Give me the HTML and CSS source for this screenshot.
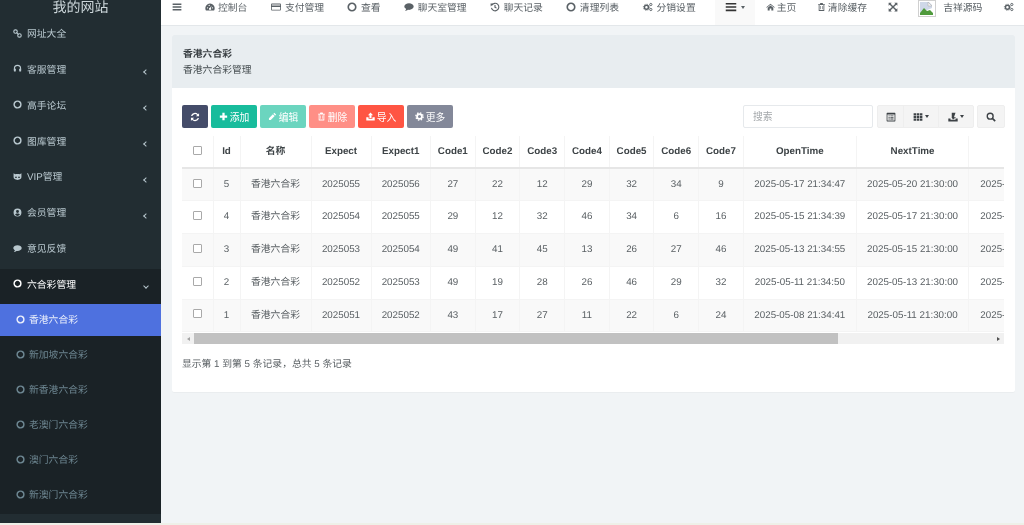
FILE: index.html
```html
<!DOCTYPE html>
<html lang="zh">
<head>
<meta charset="utf-8">
<title>香港六合彩</title>
<link rel="stylesheet" href="styles.css">
</head>
<body>
<svg class="defs" width="0" height="0" aria-hidden="true">
  <symbol id="i-circle" viewBox="0 0 16 16"><circle cx="8" cy="8" r="6" fill="none" stroke="currentColor" stroke-width="2.6"/></symbol>
  <symbol id="i-link" viewBox="0 0 16 16"><g fill="none" stroke="currentColor" stroke-width="2"><rect x="1.5" y="1.5" width="6" height="6" rx="2.6"/><rect x="8.5" y="8.5" width="6" height="6" rx="2.6"/><path d="M6 6l4 4"/></g></symbol>
  <symbol id="i-head" viewBox="0 0 16 16"><path d="M2.5 9V8a5.500 5.500 0 0 1 11 0v1" fill="none" stroke="currentColor" stroke-width="2"/><rect x="1.500" y="8" width="3.500" height="5.500" rx="1.200" fill="currentColor"/><rect x="11" y="8" width="3.500" height="5.500" rx="1.200" fill="currentColor"/></symbol>
  <symbol id="i-cat" viewBox="0 0 16 16"><path fill="currentColor" d="M1 2l3 2C5.500 3.600 10.500 3.600 12 4l3-2v7c0 3-2.500 5-7 5s-7-2-7-5z"/><circle cx="5.300" cy="9.300" r="1.500" fill="#222d32"/><circle cx="10.700" cy="9.300" r="1.500" fill="#222d32"/></symbol>
  <symbol id="i-user" viewBox="0 0 16 16"><path fill="currentColor" fill-rule="evenodd" d="M8 1a7 7 0 1 1 0 14A7 7 0 0 1 8 1zm0 2.500a2.600 2.600 0 1 0 0 5.200 2.600 2.600 0 0 0 0-5.200zM3.800 12.200c1 1.200 2.500 1.800 4.200 1.800s3.200-.6 4.200-1.800C11.800 10.500 10 9.700 8 9.700s-3.800.8-4.200 2.500z"/></symbol>
  <symbol id="i-chat" viewBox="0 0 16 16"><path fill="currentColor" d="M8 2c4 0 7.500 2.300 7.500 5.300S12 12.600 8 12.600c-.6 0-1.200 0-1.800-.1C5 13.600 3.300 14 1.500 14c1-1 1.700-1.900 1.900-3C1.500 10 .5 8.700.5 7.300.5 4.300 4 2 8 2z"/></symbol>
  <symbol id="i-bars" viewBox="0 0 16 16"><path fill="currentColor" d="M1 2.500h14v2.200H1zM1 6.900h14v2.200H1zM1 11.300h14v2.200H1z"/></symbol>
  <symbol id="i-dash" viewBox="0 0 16 16"><path fill="currentColor" fill-rule="evenodd" d="M8 2.500a7.500 7.500 0 0 1 6.500 11.200H1.500A7.500 7.500 0 0 1 8 2.500zM4 8.300a1 1 0 1 0 0 2 1 1 0 0 0 0-2zm8 0a1 1 0 1 0 0 2 1 1 0 0 0 0-2zM6.700 4.500a1 1 0 1 0 0 2 1 1 0 0 0 0-2zm3.800 1L8.200 9.200a1.700 1.700 0 1 0 1.200.6z"/></symbol>
  <symbol id="i-card" viewBox="0 0 16 16"><path fill="currentColor" fill-rule="evenodd" d="M1.500 2.500h13A1.500 1.500 0 0 1 16 4v8a1.500 1.500 0 0 1-1.500 1.500h-13A1.500 1.500 0 0 1 0 12V4a1.500 1.500 0 0 1 1.500-1.500zm-.2 1.300v1.700h13.400V3.800zm0 4v4.400h13.400V7.800z"/></symbol>
  <symbol id="i-hist" viewBox="0 0 16 16"><path fill="none" stroke="currentColor" stroke-width="1.800" d="M3 5a6 6 0 1 1-.7 4.500M8 4.800V8.500l2.500 1.300"/><path fill="currentColor" d="M.8 2.300l5 .2-4.600 4.500z"/></symbol>
  <symbol id="i-cogs" viewBox="0 0 16 16"><circle cx="5.500" cy="8.500" r="3.200" fill="none" stroke="currentColor" stroke-width="2.400"/><circle cx="5.500" cy="8.500" r="5" fill="none" stroke="currentColor" stroke-width="1.200" stroke-dasharray="1.800 2.100"/><circle cx="12.500" cy="4" r="1.800" fill="none" stroke="currentColor" stroke-width="1.500"/><circle cx="12.500" cy="12" r="1.800" fill="none" stroke="currentColor" stroke-width="1.500"/></symbol>
  <symbol id="i-home" viewBox="0 0 16 16"><path fill="currentColor" d="M8 2l7.500 6.300-.9 1L8 3.800 1.400 9.300l-.9-1zM3 9.500l5-4.200 5 4.200V14H9.500v-3.300h-3V14H3z"/></symbol>
  <symbol id="i-trash" viewBox="0 0 16 16"><path fill="currentColor" fill-rule="evenodd" d="M6 1h4l1 2h3v1.500h-1V14a1 1 0 0 1-1 1H4a1 1 0 0 1-1-1V4.500H2V3h3zM4.500 4.500v9h7v-9zM6 6h1v6H6zm3 0h1v6H9z"/></symbol>
  <symbol id="i-exp" viewBox="0 0 16 16"><path fill="currentColor" d="M1 1h5L4.300 2.700l3.700 3.700 3.700-3.700L10 1h5v5l-1.700-1.700L9.600 8l3.700 3.700L15 10v5h-5l1.700-1.700L8 9.600l-3.700 3.700L6 15H1v-5l1.700 1.700L6.400 8 2.700 4.300 1 6z"/></symbol>
  <symbol id="i-sync" viewBox="0 0 16 16"><path fill="currentColor" d="M14.500 1.800v5h-5l1.900-1.900A4.500 4.500 0 0 0 3.700 6.500H1.600a6.500 6.500 0 0 1 11.200-3zM1.500 14.200v-5h5l-1.900 1.900a4.500 4.500 0 0 0 7.700-1.600h2.100a6.500 6.500 0 0 1-11.200 3z"/></symbol>
  <symbol id="i-plus" viewBox="0 0 16 16"><path fill="currentColor" d="M6 1.500h4V6h4.500v4H10v4.500H6V10H1.500V6H6z"/></symbol>
  <symbol id="i-pen" viewBox="0 0 16 16"><path fill="currentColor" d="M11.300 1.500l3.200 3.200-1.700 1.700-3.200-3.200zM8.700 4.100l3.200 3.200-7 7H1.700v-3.200z"/></symbol>
  <symbol id="i-up" viewBox="0 0 16 16"><path fill="currentColor" d="M8 1l4.500 4.800H9.800v5H6.200v-5H3.500zM.5 9.500h4v2.500h7V9.500h4V15H.5z"/></symbol>
  <symbol id="i-cog" viewBox="0 0 16 16"><circle cx="8" cy="8" r="4.300" fill="none" stroke="currentColor" stroke-width="3.200"/><circle cx="8" cy="8" r="6.500" fill="none" stroke="currentColor" stroke-width="2.400" stroke-dasharray="2.550 2.550"/></symbol>
  <symbol id="i-table" viewBox="0 0 16 16"><path fill="currentColor" fill-rule="evenodd" d="M2 1h12a1 1 0 0 1 1 1v12a1 1 0 0 1-1 1H2a1 1 0 0 1-1-1V2a1 1 0 0 1 1-1zm.3 3v9.700h11.400V4zM4 5.500h2v1.300H4zm3 0h5v1.300H7zM4 8h2v1.300H4zm3 0h5v1.300H7zm-3 2.500h2v1.300H4zm3 0h5v1.300H7z"/></symbol>
  <symbol id="i-th" viewBox="0 0 16 16"><path fill="currentColor" d="M1 2h4v3.500H1zm5 0h4v3.500H6zm5 0h4v3.500h-4zM1 6.300h4v3.500H1zm5 0h4v3.500H6zm5 0h4v3.500h-4zM1 10.600h4v3.500H1zm5 0h4v3.500H6zm5 0h4v3.500h-4z"/></symbol>
  <symbol id="i-export" viewBox="0 0 16 16"><path fill="currentColor" d="M6 1h6L9.500 8.500H13L8 12 5.500 8.500H6zM.5 10.500h3.500v2h8v-2h3.500V15H.5z"/></symbol>
  <symbol id="i-search" viewBox="0 0 16 16"><circle cx="6.700" cy="6.700" r="4.700" fill="none" stroke="currentColor" stroke-width="2.200"/><path stroke="currentColor" stroke-width="2.600" d="M10.200 10.200l4.500 4.500"/></symbol>
</svg>

<div class="app">
  <aside class="sidebar">
    <div class="logo">我的网站</div>
    <ul class="menu">
      <li class="item"><svg class="ico"><use href="#i-link"/></svg><span>网址大全</span></li>
      <li class="item"><svg class="ico"><use href="#i-head"/></svg><span>客服管理</span><i class="chev"></i></li>
      <li class="item"><svg class="ico"><use href="#i-circle"/></svg><span>高手论坛</span><i class="chev"></i></li>
      <li class="item"><svg class="ico"><use href="#i-circle"/></svg><span>图库管理</span><i class="chev"></i></li>
      <li class="item"><svg class="ico"><use href="#i-cat"/></svg><span>VIP管理</span><i class="chev"></i></li>
      <li class="item"><svg class="ico"><use href="#i-user"/></svg><span>会员管理</span><i class="chev"></i></li>
      <li class="item"><svg class="ico"><use href="#i-chat"/></svg><span>意见反馈</span></li>
      <li class="item open"><svg class="ico"><use href="#i-circle"/></svg><span>六合彩管理</span><i class="chev down"></i></li>
    </ul>
    <ul class="submenu">
      <li class="sub active"><svg class="ico"><use href="#i-circle"/></svg><span>香港六合彩</span></li>
      <li class="sub"><svg class="ico"><use href="#i-circle"/></svg><span>新加坡六合彩</span></li>
      <li class="sub"><svg class="ico"><use href="#i-circle"/></svg><span>新香港六合彩</span></li>
      <li class="sub"><svg class="ico"><use href="#i-circle"/></svg><span>老澳门六合彩</span></li>
      <li class="sub"><svg class="ico"><use href="#i-circle"/></svg><span>澳门六合彩</span></li>
      <li class="sub"><svg class="ico"><use href="#i-circle"/></svg><span>新澳门六合彩</span></li>
    </ul>
  </aside>

  <div class="main">
    <nav class="topbar">
      <div class="nav-left">
        <a class="nav-item nav-toggle"><svg class="nico"><use href="#i-bars"/></svg></a>
        <a class="nav-item"><svg class="nico wide"><use href="#i-dash"/></svg>控制台</a>
        <a class="nav-item"><svg class="nico wide"><use href="#i-card"/></svg>支付管理</a>
        <a class="nav-item"><svg class="nico"><use href="#i-circle"/></svg>查看</a>
        <a class="nav-item"><svg class="nico"><use href="#i-chat"/></svg>聊天室管理</a>
        <a class="nav-item"><svg class="nico"><use href="#i-hist"/></svg>聊天记录</a>
        <a class="nav-item"><svg class="nico"><use href="#i-circle"/></svg>清理列表</a>
        <a class="nav-item"><svg class="nico wide"><use href="#i-cogs"/></svg>分销设置</a>
      </div>
      <div class="nav-right">
        <a class="nav-more"><svg class="nico big"><use href="#i-bars"/></svg><i class="caret"></i></a>
        <a class="nav-item tight"><svg class="nico"><use href="#i-home"/></svg>主页</a>
        <a class="nav-item tight"><svg class="nico"><use href="#i-trash"/></svg>清除缓存</a>
        <a class="nav-item tight icon-only"><svg class="nico"><use href="#i-exp"/></svg></a>
        <a class="nav-user">
          <svg class="avatar" viewBox="0 0 18 17"><rect x=".5" y=".5" width="17" height="16" fill="#fff" stroke="#d0d0d0"/><path d="M2 2h9l3 3v3L2 13z" fill="#cfd8e8"/><path d="M2 13l4-5 3 3 3-1 3 3v2H2z" fill="#4f9a3c"/><path d="M10 2l4 4h-4z" fill="#f2f2f2" stroke="#a8a8a8" stroke-width=".5"/></svg>
          <span>吉祥源码</span>
        </a>
        <a class="nav-item nav-end icon-only"><svg class="nico wide"><use href="#i-cogs"/></svg></a>
      </div>
    </nav>

    <section class="panel">
      <header class="panel-head">
        <div class="panel-title">香港六合彩</div>
        <div class="panel-desc">香港六合彩管理</div>
      </header>
      <div class="panel-body">
        <div class="toolbar">
          <div class="tool-left">
            <button class="btn navy narrow"><svg class="bico"><use href="#i-sync"/></svg></button>
            <button class="btn teal"><svg class="bico"><use href="#i-plus"/></svg>添加</button>
            <button class="btn teal faded"><svg class="bico"><use href="#i-pen"/></svg>编辑</button>
            <button class="btn red faded"><svg class="bico"><use href="#i-trash"/></svg>删除</button>
            <button class="btn red"><svg class="bico"><use href="#i-up"/></svg>导入</button>
            <button class="btn grey"><svg class="bico"><use href="#i-cog"/></svg>更多</button>
          </div>
          <div class="tool-right">
            <input class="search" type="text" placeholder="搜索">
            <div class="group">
              <button class="gbtn g1"><svg class="gico"><use href="#i-table"/></svg></button>
              <button class="gbtn g2"><svg class="gico"><use href="#i-th"/></svg><i class="caret"></i></button>
              <button class="gbtn g2"><svg class="gico"><use href="#i-export"/></svg><i class="caret"></i></button>
            </div>
            <button class="gbtn alone"><svg class="gico"><use href="#i-search"/></svg></button>
          </div>
        </div>
        <div class="table-wrap">
          <table class="grid">
            <thead>
              <tr><th><input class="check" type="checkbox"></th><th>Id</th><th>名称</th><th>Expect</th><th>Expect1</th><th>Code1</th><th>Code2</th><th>Code3</th><th>Code4</th><th>Code5</th><th>Code6</th><th>Code7</th><th>OpenTime</th><th>NextTime</th><th>Time</th></tr>
            </thead>
            <tbody>
              <tr><td><input class="check" type="checkbox"></td><td>5</td><td>香港六合彩</td><td>2025055</td><td>2025056</td><td>27</td><td>22</td><td>12</td><td>29</td><td>32</td><td>34</td><td>9</td><td>2025-05-17 21:34:47</td><td>2025-05-20 21:30:00</td><td class="last">2025-05-17 21:34:47</td></tr>
              <tr><td><input class="check" type="checkbox"></td><td>4</td><td>香港六合彩</td><td>2025054</td><td>2025055</td><td>29</td><td>12</td><td>32</td><td>46</td><td>34</td><td>6</td><td>16</td><td>2025-05-15 21:34:39</td><td>2025-05-17 21:30:00</td><td class="last">2025-05-15 21:34:39</td></tr>
              <tr><td><input class="check" type="checkbox"></td><td>3</td><td>香港六合彩</td><td>2025053</td><td>2025054</td><td>49</td><td>41</td><td>45</td><td>13</td><td>26</td><td>27</td><td>46</td><td>2025-05-13 21:34:55</td><td>2025-05-15 21:30:00</td><td class="last">2025-05-13 21:34:55</td></tr>
              <tr><td><input class="check" type="checkbox"></td><td>2</td><td>香港六合彩</td><td>2025052</td><td>2025053</td><td>49</td><td>19</td><td>28</td><td>26</td><td>46</td><td>29</td><td>32</td><td>2025-05-11 21:34:50</td><td>2025-05-13 21:30:00</td><td class="last">2025-05-11 21:34:50</td></tr>
              <tr><td><input class="check" type="checkbox"></td><td>1</td><td>香港六合彩</td><td>2025051</td><td>2025052</td><td>43</td><td>17</td><td>27</td><td>11</td><td>22</td><td>6</td><td>24</td><td>2025-05-08 21:34:41</td><td>2025-05-11 21:30:00</td><td class="last">2025-05-08 21:34:41</td></tr>
            </tbody>
          </table>
        </div>
        <div class="hscroll">
          <span class="arrow left"></span>
          <span class="thumb"></span>
          <span class="arrow right"></span>
        </div>
        <p class="summary">显示第 1 到第 5 条记录，总共 5 条记录</p>
      </div>
    </section>
  </div>
</div>
</body>
</html>
```
FILE: styles.css
```css
* { box-sizing: border-box; }
html, body { margin: 0; height: 100%; overflow: hidden; }
body { font-family: "Liberation Sans", "Noto Sans CJK SC", sans-serif; font-size: 9.8px; color: #444c4f; background: #eef0e8; text-rendering: geometricPrecision; }
.defs { position: absolute; }
ul { list-style: none; margin: 0; padding: 0; }
.app { display: flex; height: 523px; filter: blur(.3px); }

/* sidebar */
.sidebar { width: 161px; flex: none; background: #222d32; color: #b8c7ce; }
.logo { height: 17.600px; padding-top: 0; line-height: 14px; font-size: 14px; color: #ccd6da; text-align: center; overflow: hidden; }
.item { position: relative; display: flex; align-items: center; height: 35.850px; padding: 0 0 5px 13px; }
.ico { width: 9px; height: 9px; margin-right: 5px; flex: none; }
.chev { position: absolute; right: 13px; top: 17px; width: 4px; height: 4px; border-left: 1px solid #b8c7ce; border-bottom: 1px solid #b8c7ce; transform: rotate(45deg); }
.chev.down { transform: rotate(-45deg); top: 15px; }
.item.open { background: #1a2226; color: #fff; height: 35px; }
.submenu { background: #1a2226; height: 210px; color: #6d8691; }
.sub { display: flex; align-items: center; height: 35px; padding: 2px 0 0 15.500px; }
.sub .ico { margin-right: 4.500px; }
.sub.active { background: #4e71df; color: #e9eefb; height: 32px; padding: 0 0 1px 15.500px; }

/* top bar */
.main { flex: 1; min-width: 0; display: flex; flex-direction: column; background: #f1f4f6; }
.topbar { height: 26px; flex: none; display: flex; justify-content: space-between; background: #fff; border-bottom: 1px solid #e3e7ea; color: #5a6166; }
.nav-left, .nav-right { display: flex; height: 25px; align-items: flex-start; }
.nav-item { display: flex; align-items: center; height: 14px; padding: 0 11.500px; white-space: nowrap; }
.nav-item.tight { padding: 0 10.300px; }
.nav-item.tight:first-of-type { padding-left: 11.500px; }
.nav-toggle { padding: 0 10px 0 11px; }
.nav-end { padding: 0 9px 0 10.300px; }
.nico { width: 10px; height: 10px; margin-right: 4px; flex: none; }
.nico.wide { width: 12px; margin-right: 2.500px; }
.tight .nico { width: 9px; margin-right: 2px; }
.nav-toggle .nico, .icon-only .nico, .icon-only .nico.wide { margin-right: 0; }
.tight.icon-only .nico { width: 10px; }
.nico.big { width: 12px; height: 12px; margin-right: 2px; color: #333; }
.nav-more { display: flex; align-items: flex-start; justify-content: center; width: 40.500px; height: 25px; padding-top: 1px; background: #f9f9f9; }
.nav-more .caret { margin-top: 5px; }
.nav-user { display: flex; align-items: flex-start; height: 14px; padding: 0 10.300px; white-space: nowrap; }
.avatar { width: 18px; height: 17px; margin-right: 7px; flex: none; }
.caret { display: inline-block; width: 0; height: 0; margin-left: 2px; border-left: 2.500px solid transparent; border-right: 2.500px solid transparent; border-top: 3px solid currentColor; }

/* panel */
.panel { margin: 9px 9px 0 11px; height: 357px; background: #fff; border-radius: 2px; box-shadow: 0 1px 1px rgba(0,0,0,.03); }
.panel-head { height: 53px; padding: 12px 11px 0; background: #e8edf0; border-radius: 2px 2px 0 0; line-height: 15.500px; }
.panel-title { font-weight: bold; color: #3a4044; }
.panel-body { padding: 17px 10px 0 10px; }
.toolbar { display: flex; justify-content: space-between; height: 23px; margin-bottom: 8px; }
.tool-left, .tool-right { display: flex; }
.btn { display: flex; align-items: center; justify-content: center; width: 46.300px; height: 23px; margin: 0 2.700px 0 0; padding: 0; border: 0; border-radius: 2px; color: #fff; font: inherit; }
.btn.narrow { width: 26.300px; }
.navy { background: #444c69; }
.teal { background: #18bc9c; }
.teal.faded { background: #6bd5bf; }
.red { background: #ff5543; }
.red.faded { background: #ff8f86; }
.grey { background: #838899; }
.bico { width: 9px; height: 9px; margin-right: 2px; }
.narrow .bico { width: 10px; height: 10px; margin: 0; }
.search { width: 130px; height: 23px; margin-right: 4px; padding: 0 9px; border: 1px solid #e6e9ec; border-radius: 2px; font: inherit; outline: 0; background: #fff; }
.search::placeholder { color: #a4a8ab; }
.group { display: flex; margin-right: 3px; }
.gbtn { display: flex; align-items: center; justify-content: center; height: 23px; padding: 0; border: 1px solid #eeeeee; background: #f4f4f4; color: #3d4246; font: inherit; }
.g1 { width: 27px; border-radius: 2px 0 0 2px; }
.g2 { width: 36px; margin-left: -1px; }
.g2:last-child { border-radius: 0 2px 2px 0; }
.alone { width: 28px; border-radius: 2px; }
.gico { width: 10px; height: 10px; }

/* table */
.table-wrap { overflow: hidden; height: 197px; margin-right: 1px; }
.grid { table-layout: fixed; width: 1021px; border-collapse: collapse; text-align: center; color: #5a6064; line-height: 14px; }
.grid th { height: 31.500px; padding: 1px 0 0; border-bottom: 2px solid #e6e6e6; border-right: 1px solid #f4f4f4; color: #3e4447; font-weight: bold; }
.grid td { height: 32.900px; padding: 0; border-right: 1px solid #f4f4f4; white-space: nowrap; overflow: hidden; }
.grid tbody tr:first-child td { padding-top: 1px; }
.grid tbody tr { border-bottom: 1px solid #f4f4f4; }
.grid tbody tr:nth-child(odd) { background: #f9f9f9; }
.grid th:nth-child(1) { width: 31px; }
.grid th:nth-child(2) { width: 27px; }
.grid th:nth-child(3) { width: 71px; }
.grid th:nth-child(4) { width: 60px; }
.grid th:nth-child(5) { width: 59.500px; }
.grid th:nth-child(6), .grid th:nth-child(7), .grid th:nth-child(8), .grid th:nth-child(9), .grid th:nth-child(10), .grid th:nth-child(11), .grid th:nth-child(12) { width: 44.700px; }
.grid th:nth-child(13) { width: 113px; }
.grid th:nth-child(14) { width: 112.500px; }
.grid th:nth-child(15) { width: 234.100px; }
.grid td.last { text-align: left; padding-left: 11px; }
.check { appearance: none; display: inline-block; width: 9px; height: 9px; margin: 0; vertical-align: middle; position: relative; top: -1px; background: #fff; border: 1px solid #a9a9a9; border-radius: 1px; }

.hscroll { display: flex; align-items: stretch; height: 11px; margin-right: 1px; background: #f1f1f1; }
.thumb { width: 644px; background: #c1c1c1; }
.arrow { display: flex; align-items: center; justify-content: center; width: 12px; height: 11px; }
.arrow.right { margin-left: auto; width: 11px; }
.arrow::before { content: ""; width: 0; height: 0; border-top: 2.500px solid transparent; border-bottom: 2.500px solid transparent; }
.arrow.left::before { border-right: 3px solid #a3a3a3; }
.arrow.right::before { border-left: 3px solid #505050; }

.summary { margin: 13px 0 0; line-height: 15px; color: #5a6064; }
```
